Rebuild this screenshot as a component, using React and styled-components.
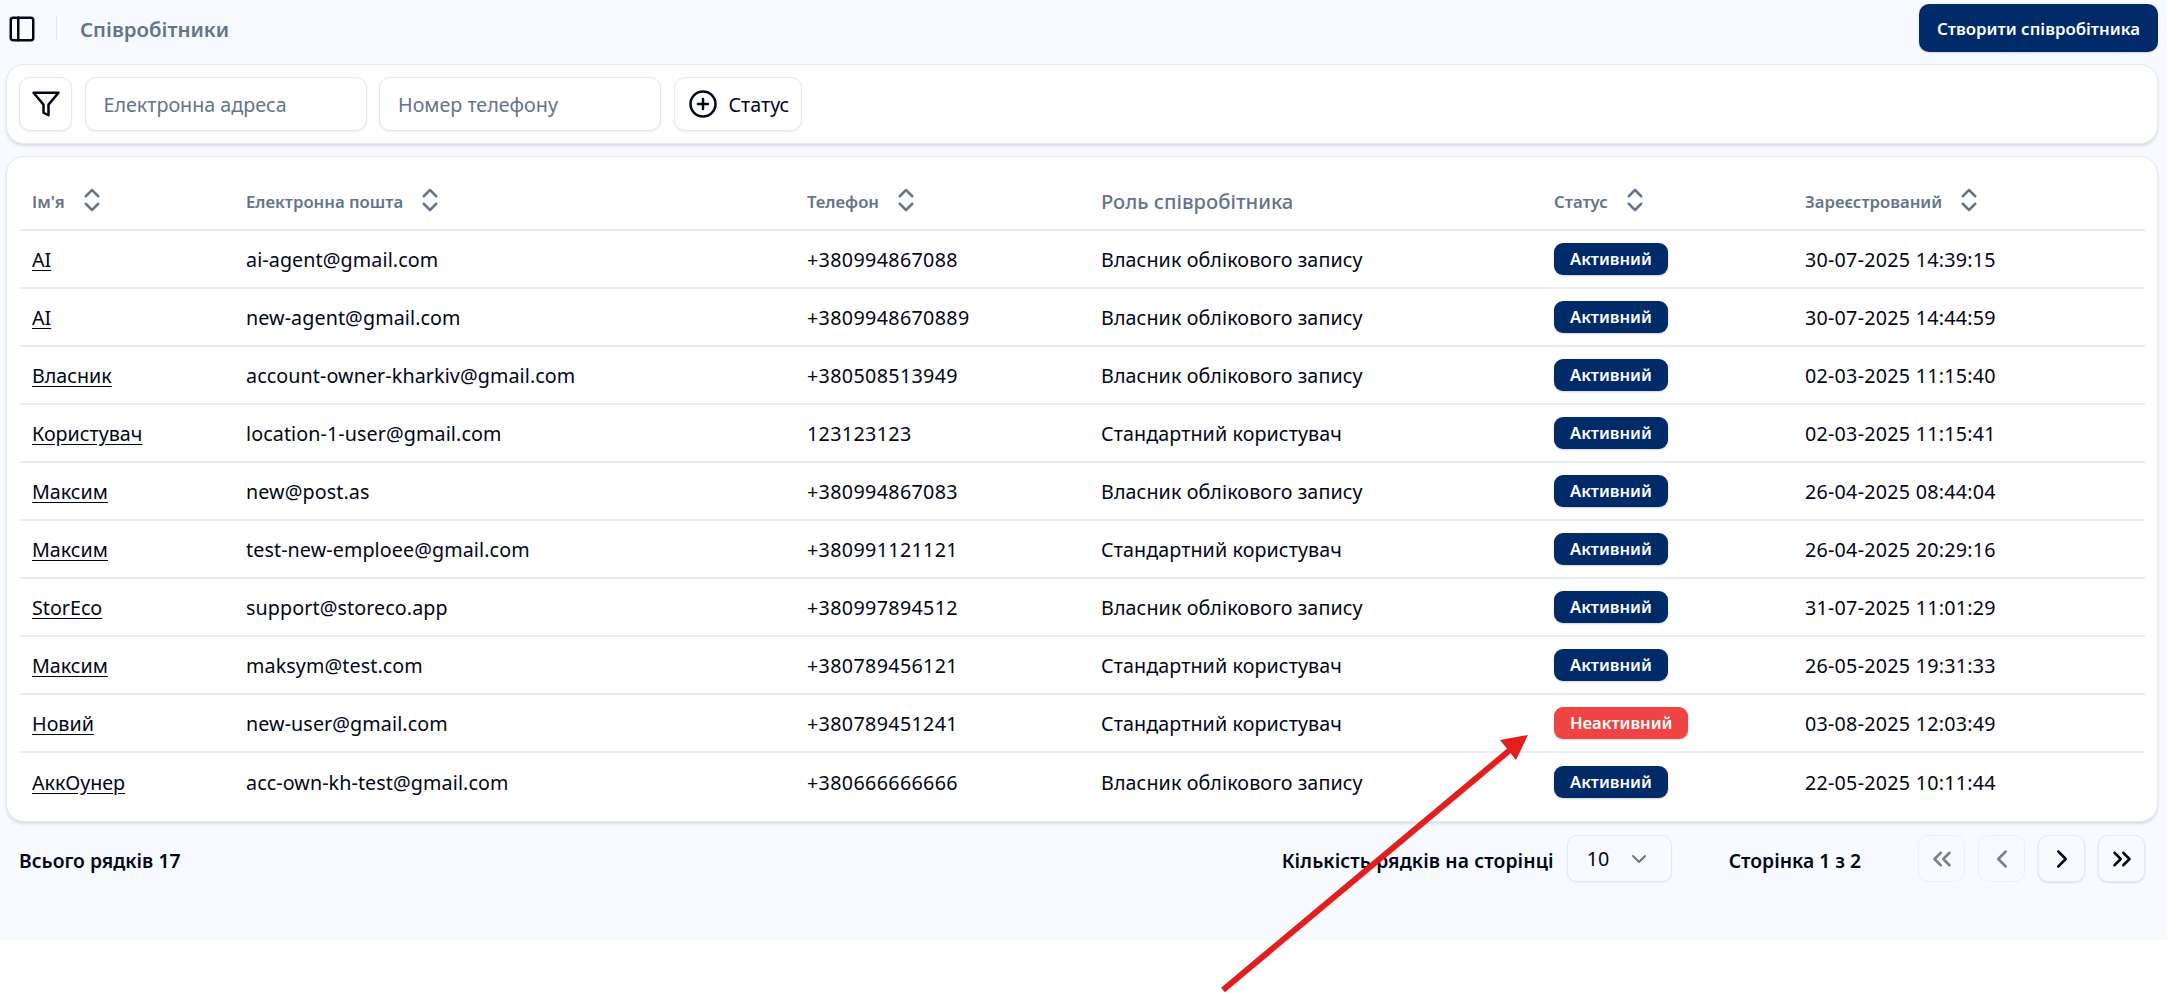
import React from "react";
import styled, { createGlobalStyle } from "styled-components";
import { PanelLeft, ChevronsUpDown, CirclePlus, ChevronDown, ChevronLeft, ChevronRight, ChevronsLeft, ChevronsRight } from "lucide-react";

const Global = createGlobalStyle`
  html, body { margin: 0; padding: 0; background: #fff; }
  body { font-family: "Noto Sans", "Open Sans", sans-serif; color: #020617; }
  * { box-sizing: border-box; }
`;
const Screen = styled.div`position: relative; width: 2167px; height: 993px; overflow: hidden; background: #fff;`;
const Page = styled.div`height: 940px; background: #f7faff; padding: 0 9px 0 6px; display: flex; flex-direction: column;`;
const TopBar = styled.header`height: 64px; display: flex; align-items: flex-start; padding-top: 4px;`;
const TopLeft = styled.div`display: flex; align-items: center; height: 50px; flex: 1; padding-left: 1px; color: #020617;`;
const Separator = styled.span`width: 1px; height: 24px; background: #e2e8f0; margin: 0 23px 0 19px;`;
const Title = styled.h1`margin: 0; font-size: 20.4px; font-weight: 600; color: #64748b;`;
const PrimaryButton = styled.button`height: 48px; width: 239px; border: 0; border-radius: 10px; background: #002a68; color: #fff; font: 600 16.8px "Noto Sans", sans-serif; box-shadow: 0 1px 2px rgba(0,0,0,.15);`;
const Card = styled.section`background: #fff; border: 1px solid #e5e9f0; border-radius: 18px; box-shadow: 0 2px 3px rgba(15,23,42,.13);`;
const FilterCard = styled(Card)`height: 80px; display: flex; align-items: center; gap: 12.5px; padding: 0 12px;`;
const ControlBase = styled.div`height: 54px; background: #fff; border: 1px solid #e5e9f0; border-radius: 11px; box-shadow: 0 1px 2px rgba(15,23,42,.07); display: flex; align-items: center;`;
const IconBox = styled(ControlBase)`width: 53px; justify-content: center; color: #020617;`;
const Field = styled(ControlBase)`width: 282px; padding-left: 18px; color: #64748b; font-size: 19.7px;`;
const StatusFilter = styled(ControlBase)`width: 128px; padding-left: 13px; gap: 11px; font-size: 19.7px; color: #020617;`;
const TableCard = styled(Card)`margin-top: 12px; height: 666px; padding: 16px 13px 10px;`;
const Table = styled.table`width: 100%; table-layout: fixed; border-collapse: separate; border-spacing: 0;`;
const Th = styled.th`height: 58px; padding: 0 0 0 12px; text-align: left; font-weight: ${p => p.$large ? 500 : 600}; font-size: ${p => p.$large ? 20.2 : 16.7}px; color: #64748b; border-bottom: 2px solid #e9ecf1;`;
const HeadInner = styled.span`display: inline-flex; align-items: center; gap: 12px; svg { margin-top: -2px; }`;
const Row = styled.tr`&:not(:last-child) td { border-bottom: 2px solid #e9ecf1; }`;
const Td = styled.td`height: 58px; padding: 0 0 0 12px; font-size: 19.7px; letter-spacing: ${p => p.$track || 0.1}px; color: #020617; white-space: nowrap;`;
const NameLink = styled.a`color: #020617; text-decoration: underline; text-underline-offset: 3px; letter-spacing: 0;`;
const Badge = styled.span`display: inline-block; height: 32px; line-height: 31px; padding: 0 16px; border-radius: 9px; background: ${p => p.$inactive ? "#ef4444" : "#002a68"}; color: #fff; font-size: 16.6px; font-weight: 600; letter-spacing: 0; box-shadow: 0 1px 2px rgba(15,23,42,.2);`;
const Footer = styled.footer`display: flex; align-items: center; margin-top: 13px; height: 47px; padding: 0 13px;`;
const FootText = styled.span`font-size: 19.3px; font-weight: 600; color: #020617; padding-top: 3px;`;
const RowsLabel = styled(FootText)`letter-spacing: .1px;`;
const Spacer = styled.div`flex: 1;`;
const SelectBox = styled.div`width: 105px; height: 47px; margin-left: 13px; border: 1px solid #e5e9f0; border-radius: 10px; background: #f8faff; box-shadow: 0 1px 2px rgba(15,23,42,.07); display: flex; align-items: center; justify-content: space-between; padding: 0 20px 0 19px; font-size: 19.7px; color: #020617;`;
const PageLabel = styled(FootText)`margin: 0 57px 0 57px;`;
const Pager = styled.div`display: flex; gap: 13px;`;
const PagerBtn = styled.button`width: 47px; height: 47px; padding: 0; border: 1px solid #e5e9f0; border-radius: 10px; background: #f8faff; box-shadow: ${p => p.disabled ? "none" : "0 1px 2px rgba(15,23,42,.12)"}; display: flex; align-items: center; justify-content: center; color: #020617; opacity: ${p => p.disabled ? .5 : 1};`;
const ArrowLayer = styled.svg`position: absolute; inset: 0; pointer-events: none;`;

const FilterIcon = () => (
  <svg width="30" height="30" viewBox="0 0 24 24" fill="none" stroke="currentColor" strokeWidth="2" strokeLinecap="round" strokeLinejoin="round">
    <polygon points="22 3 2 3 10 12.46 10 19 14 21 14 12.46 22 3" />
  </svg>
);

const rows = [
  ["AI", "ai-agent@gmail.com", "+380994867088", "Власник облікового запису", 1, "30-07-2025 14:39:15"],
  ["AI", "new-agent@gmail.com", "+3809948670889", "Власник облікового запису", 1, "30-07-2025 14:44:59"],
  ["Власник", "account-owner-kharkiv@gmail.com", "+380508513949", "Власник облікового запису", 1, "02-03-2025 11:15:40"],
  ["Користувач", "location-1-user@gmail.com", "123123123", "Стандартний користувач", 1, "02-03-2025 11:15:41"],
  ["Максим", "new@post.as", "+380994867083", "Власник облікового запису", 1, "26-04-2025 08:44:04"],
  ["Максим", "test-new-emploee@gmail.com", "+380991121121", "Стандартний користувач", 1, "26-04-2025 20:29:16"],
  ["StorEco", "support@storeco.app", "+380997894512", "Власник облікового запису", 1, "31-07-2025 11:01:29"],
  ["Максим", "maksym@test.com", "+380789456121", "Стандартний користувач", 1, "26-05-2025 19:31:33"],
  ["Новий", "new-user@gmail.com", "+380789451241", "Стандартний користувач", 0, "03-08-2025 12:03:49"],
  ["АккОунер", "acc-own-kh-test@gmail.com", "+380666666666", "Власник облікового запису", 1, "22-05-2025 10:11:44"],
];

const columns = [
  { w: 214, label: "Ім'я" },
  { w: 561, label: "Електронна пошта" },
  { w: 294, label: "Телефон" },
  { w: 453, label: "Роль співробітника", large: true },
  { w: 251, label: "Статус" },
  { w: 352, label: "Зареєстрований" },
];

export default function App() {
  return (
    <Screen>
      <Global />
      <Page>
        <TopBar>
          <TopLeft>
            <PanelLeft size={30} strokeWidth={2} />
            <Separator />
            <Title>Співробітники</Title>
          </TopLeft>
          <PrimaryButton>Створити співробітника</PrimaryButton>
        </TopBar>
        <FilterCard>
          <IconBox><FilterIcon /></IconBox>
          <Field>Електронна адреса</Field>
          <Field>Номер телефону</Field>
          <StatusFilter><CirclePlus size={30} strokeWidth={2} />Статус</StatusFilter>
        </FilterCard>
        <TableCard>
          <Table>
            <colgroup>{columns.map(c => <col key={c.label} width={c.w} />)}</colgroup>
            <thead>
              <tr>
                {columns.map(c => (
                  <Th key={c.label} $large={c.large}>
                    <HeadInner>{c.label}{!c.large && <ChevronsUpDown size={30} strokeWidth={2} />}</HeadInner>
                  </Th>
                ))}
              </tr>
            </thead>
            <tbody>
              {rows.map((r, i) => (
                <Row key={i}>
                  <Td><NameLink href="#">{r[0]}</NameLink></Td>
                  <Td>{r[1]}</Td>
                  <Td $track={0.35}>{r[2]}</Td>
                  <Td>{r[3]}</Td>
                  <Td><Badge $inactive={!r[4]}>{r[4] ? "Активний" : "Неактивний"}</Badge></Td>
                  <Td $track={0.25}>{r[5]}</Td>
                </Row>
              ))}
            </tbody>
          </Table>
        </TableCard>
        <Footer>
          <FootText>Всього рядків 17</FootText>
          <Spacer />
          <RowsLabel>Кількість рядків на сторінці</RowsLabel>
          <SelectBox>10<ChevronDown size={24} strokeWidth={2} color="#64748b" /></SelectBox>
          <PageLabel>Сторінка 1 з 2</PageLabel>
          <Pager>
            <PagerBtn disabled><ChevronsLeft size={30} /></PagerBtn>
            <PagerBtn disabled><ChevronLeft size={30} /></PagerBtn>
            <PagerBtn><ChevronRight size={30} /></PagerBtn>
            <PagerBtn><ChevronsRight size={30} /></PagerBtn>
          </Pager>
        </Footer>
      </Page>
      <ArrowLayer width="2167" height="993" viewBox="0 0 2167 993">
        <line x1="1223" y1="990" x2="1510" y2="750" stroke="#e41e1e" strokeWidth="6" />
        <polygon points="1528,735 1500,740 1516,760" fill="#e41e1e" />
      </ArrowLayer>
    </Screen>
  );
}
